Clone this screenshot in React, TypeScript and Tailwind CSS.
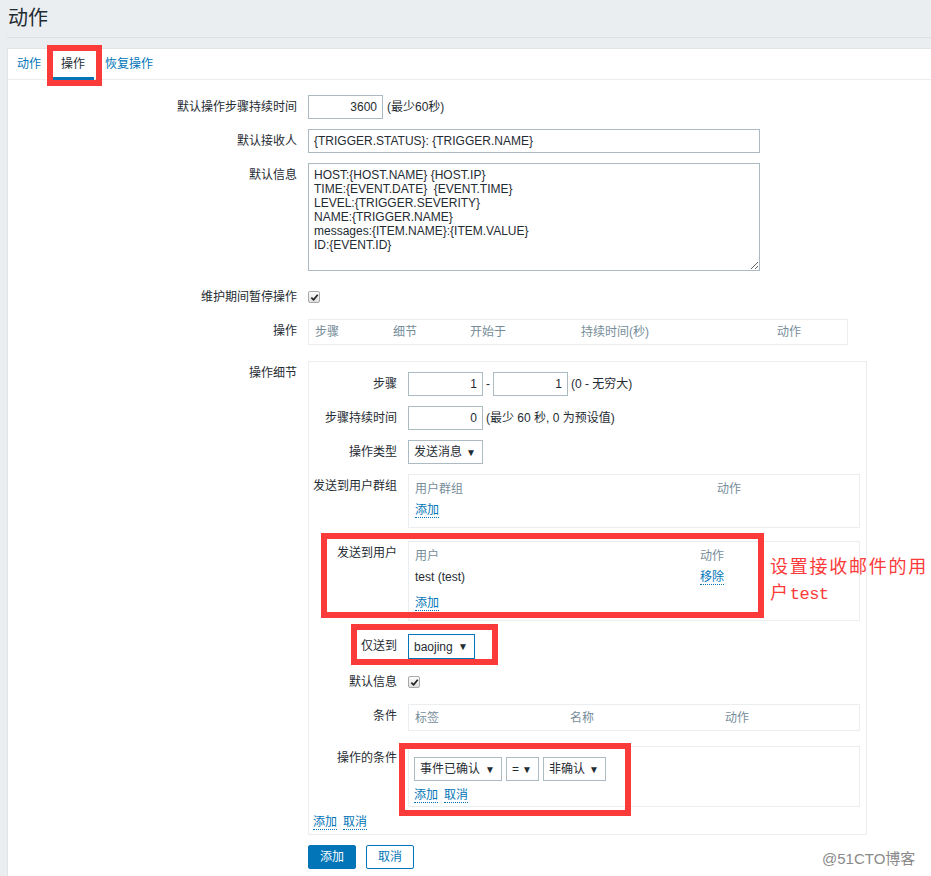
import React from "react";

const LINK = "text-[#0275b8] border-b border-dotted border-[#0275b8] leading-[14px] cursor-pointer";

const Checkbox = () => (
  <span className="inline-flex h-[12px] w-[12px] items-center justify-center rounded-[2px] border border-[#a9a9a9] bg-gradient-to-b from-[#fdfdfd] to-[#dedede]">
    <svg viewBox="0 0 10 10" className="h-[9px] w-[9px]">
      <path d="M1.5 5.2 L4 7.6 L8.6 2" fill="none" stroke="#222" strokeWidth="1.9" />
    </svg>
  </span>
);

const Select = ({ label, w }: { label: string; w: string }) => (
  <div className={`flex h-[24px] items-center justify-between border border-[#acbbc2] bg-white pl-[5px] pr-[6px] ${w}`}>
    <span>{label}</span>
    <span className="text-[10px] text-[#1f2c33]">▼</span>
  </div>
);

const Row = ({ label, children, cls = "py-[5px]" }: { label: string; children: React.ReactNode; cls?: string }) => (
  <div className={`flex gap-[11px] ${cls}`}>
    <div className="w-[289px] shrink-0 text-right leading-[24px]">{label}</div>
    <div className="flex min-w-0 items-start">{children}</div>
  </div>
);

const SubRow = ({ label, children, cls = "py-[5px]" }: { label: string; children: React.ReactNode; cls?: string }) => (
  <div className={`flex gap-[11px] ${cls}`}>
    <div className="w-[88px] shrink-0 whitespace-nowrap text-right leading-[24px]">{label}</div>
    <div className="flex min-w-0 items-center">{children}</div>
  </div>
);

const message = `HOST:{HOST.NAME} {HOST.IP}
TIME:{EVENT.DATE}  {EVENT.TIME}
LEVEL:{TRIGGER.SEVERITY}
NAME:{TRIGGER.NAME}
messages:{ITEM.NAME}:{ITEM.VALUE}
ID:{EVENT.ID}`;

export default function App() {
  return (
    <div className="relative min-h-[876px] overflow-hidden bg-[#ebeef1] font-['Liberation_Sans','Noto_Sans_CJK_SC',sans-serif] text-[12px] text-[#1f2c33]">
      {/* Page header */}
      <header className="ml-[7px] h-[38px] border-b border-[#dce0e3]">
        <h1 className="pl-[1px] text-[20px] font-normal leading-[36px] text-[#1f2c33]">动作</h1>
      </header>

      <div className="ml-[7px] mt-[10px] min-h-[828px] border-l border-t border-[#dfe4e7] bg-white">
        {/* Tabs */}
        <div className="flex h-[31px] border-b border-[#ebeef0]">
          <div className="pl-[9px] pr-[10px] leading-[30px] text-[#0275b8]">动作</div>
          <div className="relative px-[10px] leading-[30px] text-[#1f2c33]">
            操作
            <span className="absolute bottom-[-1px] left-[2px] right-[1px] h-[3px] bg-[#0275b8]" />
          </div>
          <div className="px-[10px] leading-[30px] text-[#0275b8]">恢复操作</div>
        </div>

        {/* Form */}
        <div className="pt-[10px]">
          <Row label="默认操作步骤持续时间">
            <input
              readOnly
              defaultValue="3600"
              className="h-[24px] w-[75px] border border-[#acbbc2] px-[5px] text-right outline-none"
            />
            <span className="ml-[4px] leading-[24px]">(最少60秒)</span>
          </Row>
          <Row label="默认接收人">
            <input
              readOnly
              defaultValue="{TRIGGER.STATUS}: {TRIGGER.NAME}"
              className="h-[24px] w-[452px] border border-[#acbbc2] px-[5px] outline-none"
            />
          </Row>
          <Row label="默认信息">
            <textarea
              readOnly
              defaultValue={message}
              className="h-[108px] w-[452px] border border-[#acbbc2] px-[5px] py-[4px] leading-[14px] outline-none"
            />
          </Row>
          <Row label="维护期间暂停操作" cls="pt-[9px] pb-[5px]">
            <div className="flex h-[24px] items-center">
              <Checkbox />
            </div>
          </Row>
          <Row label="操作">
            <div className="flex h-[26px] w-[540px] items-center border border-[#ebeef0] pl-[6px] text-[#768d99]">
              <span className="w-[78px]">步骤</span>
              <span className="w-[77px]">细节</span>
              <span className="w-[111px]">开始于</span>
              <span className="w-[196px]">持续时间(秒)</span>
              <span>动作</span>
            </div>
          </Row>
          <Row label="操作细节" cls="pt-[11px] pb-[5px]">
            <div className="w-[559px] border border-[#ebeef0] pb-[4px] pt-[5px]">
              <SubRow label="步骤">
                <input readOnly defaultValue="1" className="h-[24px] w-[75px] border border-[#acbbc2] px-[5px] text-right outline-none" />
                <span className="px-[3px]">-</span>
                <input readOnly defaultValue="1" className="h-[24px] w-[75px] border border-[#acbbc2] px-[5px] text-right outline-none" />
                <span className="ml-[3px]">(0 - 无穷大)</span>
              </SubRow>
              <SubRow label="步骤持续时间">
                <input readOnly defaultValue="0" className="h-[24px] w-[75px] border border-[#acbbc2] px-[5px] text-right outline-none" />
                <span className="ml-[3px]">(最少 60 秒, 0 为预设值)</span>
              </SubRow>
              <SubRow label="操作类型">
                <Select label="发送消息" w="w-[75px]" />
              </SubRow>
              <SubRow label="发送到用户群组" cls="pt-[5px] pb-[8px]">
                <div className="w-[452px] self-start border border-[#ebeef0] px-[6px] pb-[7px] pt-[3px]">
                  <div className="flex leading-[22px] text-[#768d99]">
                    <span className="w-[302px]">用户群组</span>
                    <span>动作</span>
                  </div>
                  <div className="leading-[20px]">
                    <span className={LINK}>添加</span>
                  </div>
                </div>
              </SubRow>
              <SubRow label="发送到用户">
                <div className="w-[452px] self-start border border-[#ebeef0] px-[6px] pb-[7px] pt-[3px]">
                  <div className="flex leading-[22px] text-[#768d99]">
                    <span className="w-[285px]">用户</span>
                    <span>动作</span>
                  </div>
                  <div className="flex h-[20px] items-center">
                    <span className="w-[285px]">test (test)</span>
                    <span className={LINK}>移除</span>
                  </div>
                  <div className="mt-[6px] leading-[20px]">
                    <span className={LINK}>添加</span>
                  </div>
                </div>
              </SubRow>
              <SubRow label="仅送到" cls="pt-[8px] pb-[5px]">
                <div className="flex h-[25px] w-[67px] items-center justify-between border border-[#0275b8] pl-[5px] pr-[6px]">
                  <span>baojing</span>
                  <span className="text-[10px]">▼</span>
                </div>
              </SubRow>
              <SubRow label="默认信息" cls="pt-[6px] pb-[5px]">
                <div className="flex h-[24px] items-center">
                  <Checkbox />
                </div>
              </SubRow>
              <SubRow label="条件">
                <div className="flex h-[27px] w-[452px] items-center border border-[#ebeef0] pl-[6px] text-[#768d99]">
                  <span className="w-[155px]">标签</span>
                  <span className="w-[155px]">名称</span>
                  <span>动作</span>
                </div>
              </SubRow>
              <SubRow label="操作的条件" cls="pt-[10px] pb-[5px]">
                <div className="h-[61px] w-[452px] self-start border border-[#ebeef0] px-[5px] pt-[10px]">
                  <div className="flex gap-[4px]">
                    <Select label="事件已确认" w="w-[88px] h-[23px]" />
                    <Select label="=" w="w-[33px] h-[23px]" />
                    <Select label="非确认" w="w-[63px] h-[23px]" />
                  </div>
                  <div className="mt-[7px] flex gap-[6px] leading-[16px]">
                    <span className={LINK}>添加</span>
                    <span className={LINK}>取消</span>
                  </div>
                </div>
              </SubRow>
              <div className="flex gap-[6px] pl-[4px] pt-[3px] leading-[16px]">
                <span className={LINK}>添加</span>
                <span className={LINK}>取消</span>
              </div>
            </div>
          </Row>
          <div className="flex gap-[10px] pl-[300px] pt-[5px]">
            <button className="h-[24px] w-[48px] rounded-[2px] border border-[#0275b8] bg-[#0275b8] text-white">添加</button>
            <button className="h-[24px] w-[48px] rounded-[2px] border border-[#0275b8] bg-white text-[#0275b8]">取消</button>
          </div>
        </div>
      </div>

      {/* Annotations */}
      <div className="pointer-events-none absolute left-[47px] top-[45px] h-[41px] w-[55px] border-[6px] border-[#fb3a3a]" />
      <div className="pointer-events-none absolute left-[321px] top-[533px] h-[85px] w-[443px] border-[6px] border-[#fb3a3a]" />
      <div className="pointer-events-none absolute left-[351px] top-[624px] h-[41px] w-[147px] border-[6px] border-[#fb3a3a]" />
      <div className="pointer-events-none absolute left-[399px] top-[743px] h-[73px] w-[232px] border-[6px] border-[#fb3a3a]" />
      <div className="absolute left-[770px] top-[552px] w-[170px] font-['Noto_Sans_CJK_SC',sans-serif] text-[18px] leading-[26px] tracking-[1.75px] text-[#fb3a3a]">
        设置接收邮件的用
        <br />
        户<span className="font-['Liberation_Mono',monospace] text-[17px] tracking-[-0.5px]">test</span>
      </div>
      <div className="absolute left-[822px] top-[848px] text-[15px] text-[#8a8a8a]">@51CTO博客</div>
    </div>
  );
}
